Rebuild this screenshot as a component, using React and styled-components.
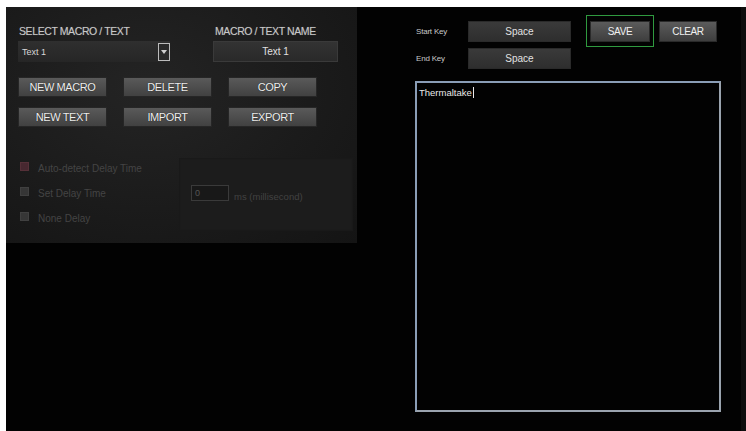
import React from "react";
import styled, { createGlobalStyle } from "styled-components";

const Global = createGlobalStyle`
  html, body { margin: 0; padding: 0; background: #fff; }
  body { font-family: "Liberation Sans", Arial, sans-serif; }
`;

const Frame = styled.div`
  margin: 7px 0 0 6px;
  width: 740px;
  height: 424px;
  background: #020202;
  display: flex;
  align-items: flex-start;
  overflow: hidden;
`;

const LeftPanel = styled.div`
  width: 351px;
  height: 236px;
  box-sizing: border-box;
  padding: 18px 0 0 12px;
  background: radial-gradient(ellipse at 40% 35%, #242424 0%, #1b1b1b 55%, #141414 100%);
  display: flex;
  flex-direction: column;
`;

const FieldGrid = styled.div`
  display: grid;
  grid-template-columns: 195px 125px;
  row-gap: 4px;
`;

const Label = styled.div`
  font-size: 10.5px;
  line-height: 12px;
  color: #c8c8c8;
  letter-spacing: -0.4px;
  padding-left: ${p => p.$indent || 1}px;
  text-shadow: 0 0 1px rgba(255,255,255,0.3);
`;

const SelectBox = styled.div`
  width: 152px;
  height: 21px;
  display: flex;
  align-items: center;
  justify-content: space-between;
  background: linear-gradient(#2f2f2f, #262626);
  box-sizing: border-box;
  padding-left: 4px;
  font-size: 9px;
  color: #d8d8d8;
`;

const ArrowBtn = styled.div`
  width: 12px;
  height: 18px;
  border: 1px solid #bcbcbc;
  box-sizing: border-box;
  background: #2a2a2a;
  display: flex;
  align-items: center;
  justify-content: center;
`;

const NameBox = styled.div`
  width: 125px;
  height: 21px;
  box-sizing: border-box;
  border: 1px solid #3a3a3a;
  background: linear-gradient(#333, #292929);
  display: flex;
  align-items: center;
  justify-content: center;
  font-size: 10px;
  color: #e0e0e0;
`;

const ButtonGrid = styled.div`
  margin-top: 15px;
  display: grid;
  grid-template-columns: repeat(3, 89px);
  column-gap: 16px;
  row-gap: 10px;
`;

const GrayButton = styled.div`
  height: 20px;
  display: flex;
  align-items: center;
  justify-content: center;
  background: linear-gradient(#5a5a5a, #414141);
  border: 1px solid #262626;
  box-sizing: border-box;
  font-size: 11px;
  letter-spacing: -0.4px;
  color: #efefef;
  text-shadow: 0 0 1px rgba(0,0,0,0.8);
`;

const OptionArea = styled.div`
  margin-top: 29px;
  display: grid;
  grid-template-columns: 165px 170px;
  grid-template-rows: repeat(3, 25px);
  align-items: center;
`;

const OptionRow = styled.div`
  display: flex;
  align-items: center;
  gap: 9px;
  padding-left: 2px;
  font-size: 10px;
  color: #444;
  grid-column: 1;
`;

const Check = styled.div`
  width: 7px;
  height: 7px;
  background: ${p => (p.$red ? "#472830" : "#363636")};
  border: 1px solid ${p => (p.$red ? "#553038" : "#404040")};
  margin-top: -4px;
`;

const DelayBox = styled.div`
  grid-column: 2;
  grid-row: 1 / 4;
  align-self: stretch;
  margin: 2px 0 0 -4px;
  background: #1c1c1c;
  box-shadow: inset 0 0 2px #161616;
  display: flex;
  align-items: center;
  padding-left: 12px;
  gap: 5px;
`;

const DelayInput = styled.div`
  width: 38px;
  height: 16px;
  box-sizing: border-box;
  border: 1px solid #3a3a3a;
  background: #181818;
  font-size: 9px;
  color: #555;
  padding-left: 3px;
  line-height: 14px;
  margin-top: -4px;
`;

const DelayUnit = styled.span`
  font-size: 9.5px;
  color: #424242;
  margin-top: 4px;
`;

const RightPanel = styled.div`
  flex: 1;
  height: 100%;
  box-sizing: border-box;
  padding: 8px 0 0 58px;
  display: flex;
  flex-direction: column;
  border-right: 5px solid #0d0d0d;
`;

const KeyGrid = styled.div`
  display: grid;
  grid-template-columns: 53px 103px 15px 68px 5px 58px;
  grid-template-rows: 32px 22px;
  align-items: center;
`;

const KeyLabel = styled.div`
  font-size: 8px;
  color: #c8c8c8;
  letter-spacing: -0.2px;
  padding-left: 1px;
  grid-column: 1;
`;

const KeyField = styled.div`
  grid-column: 2;
  height: 21px;
  box-sizing: border-box;
  background: linear-gradient(#3a3a3a, #2e2e2e);
  border: 1px solid #2a2a2a;
  display: flex;
  align-items: center;
  justify-content: center;
  font-size: 10px;
  color: #e2e2e2;
`;

const SaveWrap = styled.div`
  grid-column: 4;
  height: 32px;
  box-sizing: border-box;
  border: 1px solid #2f9a3f;
  padding: 3px;
  display: flex;
`;

const ActionButton = styled.div`
  grid-column: ${p => p.$col || "auto"};
  flex: 1;
  height: 21px;
  align-self: center;
  box-sizing: border-box;
  background: linear-gradient(#5b5b5b, #3e3e3e);
  border: 1px solid #2a2a2a;
  display: flex;
  align-items: center;
  justify-content: center;
  font-size: 10px;
  letter-spacing: -0.4px;
  color: #f0f0f0;
`;

const TextArea = styled.div`
  margin-top: 12px;
  width: 306px;
  height: 331px;
  box-sizing: border-box;
  border: 2px solid #8a9db6;
  border-right-color: #9aa3ae;
  border-bottom-color: #9aa3ae;
  padding: 4px 2px;
  font-size: 9.5px;
  color: #e8e8e8;
  display: flex;
  align-items: flex-start;
`;

const Caret = styled.span`
  display: inline-block;
  width: 1px;
  height: 11px;
  background: #e8e8e8;
  margin-left: 1px;
`;

export default function App() {
  return (
    <>
      <Global />
      <Frame>
        <LeftPanel>
          <FieldGrid>
            <Label>SELECT MACRO / TEXT</Label>
            <Label $indent={2}>MACRO / TEXT NAME</Label>
            <SelectBox>
              <span>Text 1</span>
              <ArrowBtn>
                <svg width="6" height="4" viewBox="0 0 6 4">
                  <path d="M0 0 L6 0 L3 4 Z" fill="#d0d0d0" />
                </svg>
              </ArrowBtn>
            </SelectBox>
            <NameBox>Text 1</NameBox>
          </FieldGrid>
          <ButtonGrid>
            <GrayButton>NEW MACRO</GrayButton>
            <GrayButton>DELETE</GrayButton>
            <GrayButton>COPY</GrayButton>
            <GrayButton>NEW TEXT</GrayButton>
            <GrayButton>IMPORT</GrayButton>
            <GrayButton>EXPORT</GrayButton>
          </ButtonGrid>
          <OptionArea>
            <OptionRow>
              <Check $red />
              Auto-detect Delay Time
            </OptionRow>
            <DelayBox>
              <DelayInput>0</DelayInput>
              <DelayUnit>ms (millisecond)</DelayUnit>
            </DelayBox>
            <OptionRow>
              <Check />
              Set Delay Time
            </OptionRow>
            <OptionRow>
              <Check />
              None Delay
            </OptionRow>
          </OptionArea>
        </LeftPanel>
        <RightPanel>
          <KeyGrid>
            <KeyLabel>Start Key</KeyLabel>
            <KeyField>Space</KeyField>
            <SaveWrap>
              <ActionButton>SAVE</ActionButton>
            </SaveWrap>
            <ActionButton $col={6}>CLEAR</ActionButton>
            <KeyLabel>End Key</KeyLabel>
            <KeyField>Space</KeyField>
          </KeyGrid>
          <TextArea>
            Thermaltake
            <Caret />
          </TextArea>
        </RightPanel>
      </Frame>
    </>
  );
}
